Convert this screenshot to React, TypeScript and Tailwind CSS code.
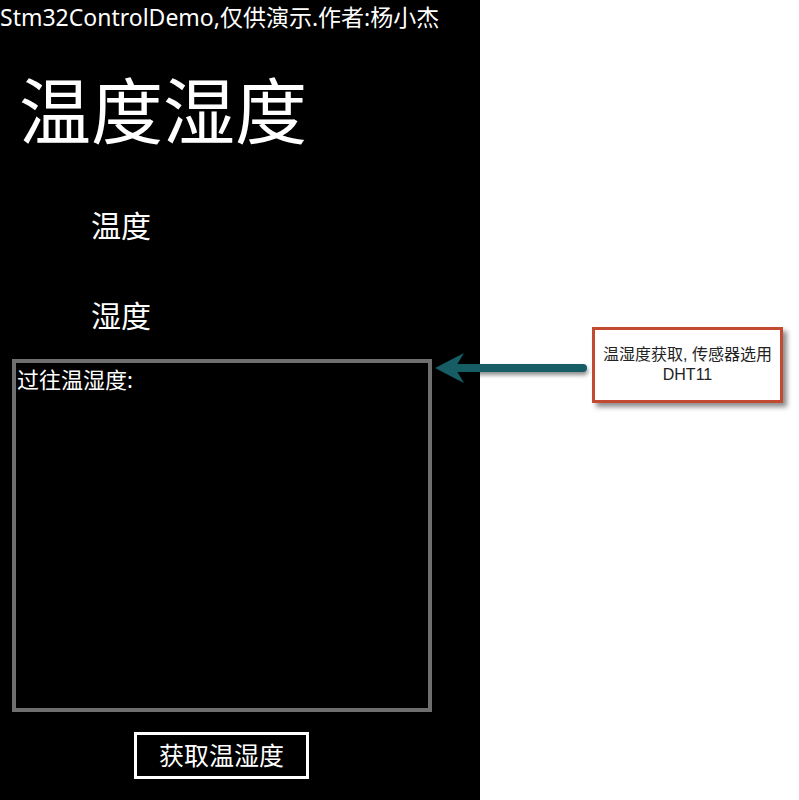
import React from "react";

const font = { fontFamily: '"Noto Sans", "Noto Sans CJK SC", sans-serif' };

const Callout = () => {
  return (
    <>
      <svg
        className="absolute left-[430px] top-[345px]"
        width="165"
        height="46"
        viewBox="0 0 165 46"
      >
        <defs>
          <filter id="sh" x="-10%" y="-30%" width="130%" height="180%">
            <feDropShadow dx="1" dy="3" stdDeviation="2" floodColor="#000" floodOpacity="0.45" />
          </filter>
        </defs>
        <g filter="url(#sh)">
          <line x1="28" y1="23" x2="153" y2="23" stroke="#135d66" strokeWidth="8" strokeLinecap="round" />
          <polygon points="5,23 34,8 25,23 34,38" fill="#135d66" />
        </g>
      </svg>
      <div className="absolute left-[592px] top-[327px] w-[191px] h-[76px] bg-white border-[3px] border-[#c14a30] shadow-[4px_4px_5px_rgba(0,0,0,0.45)] flex flex-col items-center justify-center text-[#222] text-[16px] leading-[20px]"
        style={{ fontFamily: '"Liberation Sans", "Noto Sans CJK SC", sans-serif' }}
      >
        <div className="whitespace-nowrap">温湿度获取, 传感器选用</div>
        <div>DHT11</div>
      </div>
    </>
  );
};

export default function App() {
  return (
    <div className="relative flex w-[799px] h-[800px] bg-white overflow-hidden" style={font}>
      <div className="w-[480px] h-[800px] bg-black text-white flex flex-col">
        <div className="pt-[6px] text-[23px] leading-[23px] whitespace-nowrap">
          Stm32ControlDemo,仅供演示.作者:杨小杰
        </div>
        <div className="mt-[45px] pl-[19px] text-[72px] leading-[72px]">温度湿度</div>
        <div className="mt-[65px] pl-[91px] text-[30px] leading-[30px]">温度</div>
        <div className="mt-[60px] pl-[91px] text-[30px] leading-[30px]">湿度</div>
        <div className="mt-[28px] ml-[12px] w-[420px] h-[353px] border-4 border-[#6e6e6e]">
          <div className="pt-[4px] pl-[1px] text-[22px] leading-[24px]">过往温湿度:</div>
        </div>
        <div className="mt-[20px] ml-[134px] w-[175px] h-[47px] border-[3px] border-white flex items-center justify-center text-[25px] leading-[25px]">
          获取温湿度
        </div>
      </div>
      <div className="flex-1" />
      <Callout />
    </div>
  );
}
